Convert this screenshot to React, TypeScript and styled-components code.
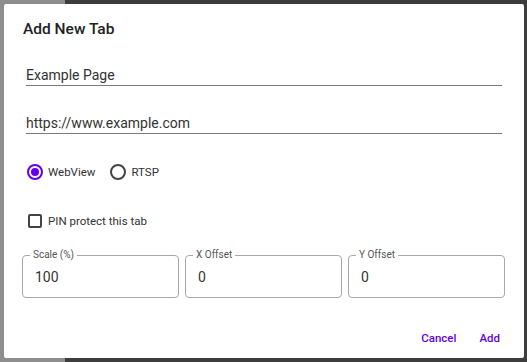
import styled, { createGlobalStyle } from "styled-components";

const GlobalStyle = createGlobalStyle`
  html, body {
    margin: 0;
    padding: 0;
    width: 527px;
    height: 362px;
    overflow: hidden;
    font-family: Roboto, "Liberation Sans", sans-serif;
  }
`;

type Option = { label: string; selected: boolean };

const modes: Option[] = [
  { label: "WebView", selected: true },
  { label: "RTSP", selected: false },
];

const offsets = [
  { label: "Scale (%)", value: "100" },
  { label: "X Offset", value: "0" },
  { label: "Y Offset", value: "0" },
];

export default function App() {
  return (
    <>
      <GlobalStyle />
      <Backdrop>
        <Dialog>
          <Title>Add New Tab</Title>
          <Body>
            <TextField top={24}>Example Page</TextField>
            <TextField top={27}>https://www.example.com</TextField>

            <RadioRow>
              {modes.map((m) => (
                <Choice key={m.label}>
                  <RadioCircle selected={m.selected} />
                  <ChoiceLabel>{m.label}</ChoiceLabel>
                </Choice>
              ))}
            </RadioRow>

            <CheckRow>
              <CheckBox />
              <ChoiceLabel>PIN protect this tab</ChoiceLabel>
            </CheckRow>

            <OffsetGrid>
              {offsets.map((o) => (
                <Outlined key={o.label}>
                  <FloatLabel>{o.label}</FloatLabel>
                  <OutlinedValue>{o.value}</OutlinedValue>
                </Outlined>
              ))}
            </OffsetGrid>
          </Body>
          <Actions>
            <TextButton>Cancel</TextButton>
            <TextButton>Add</TextButton>
          </Actions>
        </Dialog>
      </Backdrop>
    </>
  );
}

const Backdrop = styled.div`
  width: 527px;
  height: 362px;
  box-sizing: border-box;
  padding: 4px 3px 4px 4px;
  background: linear-gradient(to right, #8e8e8e 0 65px, #3d3d3d 65px);
`;

const Dialog = styled.div`
  height: 354px;
  background: #fff;
  border-radius: 2px;
  display: flex;
  flex-direction: column;
  box-sizing: border-box;
`;

const Title = styled.h2`
  margin: 13px 0 0 19px;
  font-size: 15.5px;
  line-height: 24px;
  font-weight: 500;
  color: #222;
`;

const Body = styled.div`
  padding: 0 19px 0 18px;
  display: flex;
  flex-direction: column;
`;

const TextField = styled.div<{ top: number }>`
  margin: ${(p) => p.top}px 3px 0 4px;
  height: 20px;
  line-height: 20px;
  font-size: 14px;
  color: #333;
  border-bottom: 1px solid #7a7a7a;
`;

const RadioRow = styled.div`
  margin-top: 28px;
  display: flex;
  align-items: center;
  gap: 15px;
  height: 20px;
  padding-left: 5px;
`;

const Choice = styled.label`
  display: flex;
  align-items: center;
  gap: 5px;
`;

const RadioCircle = styled.span<{ selected: boolean }>`
  width: 16px;
  height: 16px;
  box-sizing: border-box;
  border-radius: 50%;
  border: 2px solid ${(p) => (p.selected ? "#6200ee" : "#444")};
  display: flex;
  align-items: center;
  justify-content: center;

  &::after {
    content: "";
    width: 8px;
    height: 8px;
    border-radius: 50%;
    background: ${(p) => (p.selected ? "#6200ee" : "transparent")};
  }
`;

const ChoiceLabel = styled.span`
  font-size: 11.5px;
  color: #333;
  line-height: 20px;
`;

const CheckRow = styled.label`
  margin-top: 29px;
  height: 20px;
  display: flex;
  align-items: center;
  gap: 6px;
  padding-left: 6px;
`;

const CheckBox = styled.span`
  width: 14px;
  height: 14px;
  box-sizing: border-box;
  border: 2px solid #444;
  border-radius: 2px;
`;

const OffsetGrid = styled.div`
  margin-top: 24px;
  display: grid;
  grid-template-columns: repeat(3, 1fr);
  gap: 6px;
`;

const Outlined = styled.div`
  position: relative;
  height: 43px;
  box-sizing: border-box;
  border: 1px solid #a8a8a8;
  border-radius: 4px;
  display: flex;
  align-items: center;
  padding-left: 12px;
`;

const FloatLabel = styled.span`
  position: absolute;
  top: -7px;
  left: 7px;
  padding: 0 3px;
  background: #fff;
  font-size: 10px;
  line-height: 12px;
  color: #555;
`;

const OutlinedValue = styled.span`
  font-size: 14px;
  color: #333;
`;

const Actions = styled.div`
  margin-top: auto;
  margin-bottom: 2px;
  display: flex;
  justify-content: flex-end;
  gap: 7px;
  padding-right: 16px;
`;

const TextButton = styled.button`
  background: none;
  border: none;
  height: 36px;
  padding: 0 8px;
  font-family: Roboto, "Liberation Sans", sans-serif;
  font-size: 11.5px;
  font-weight: 500;
  color: #6200ee;
  cursor: pointer;
`;
